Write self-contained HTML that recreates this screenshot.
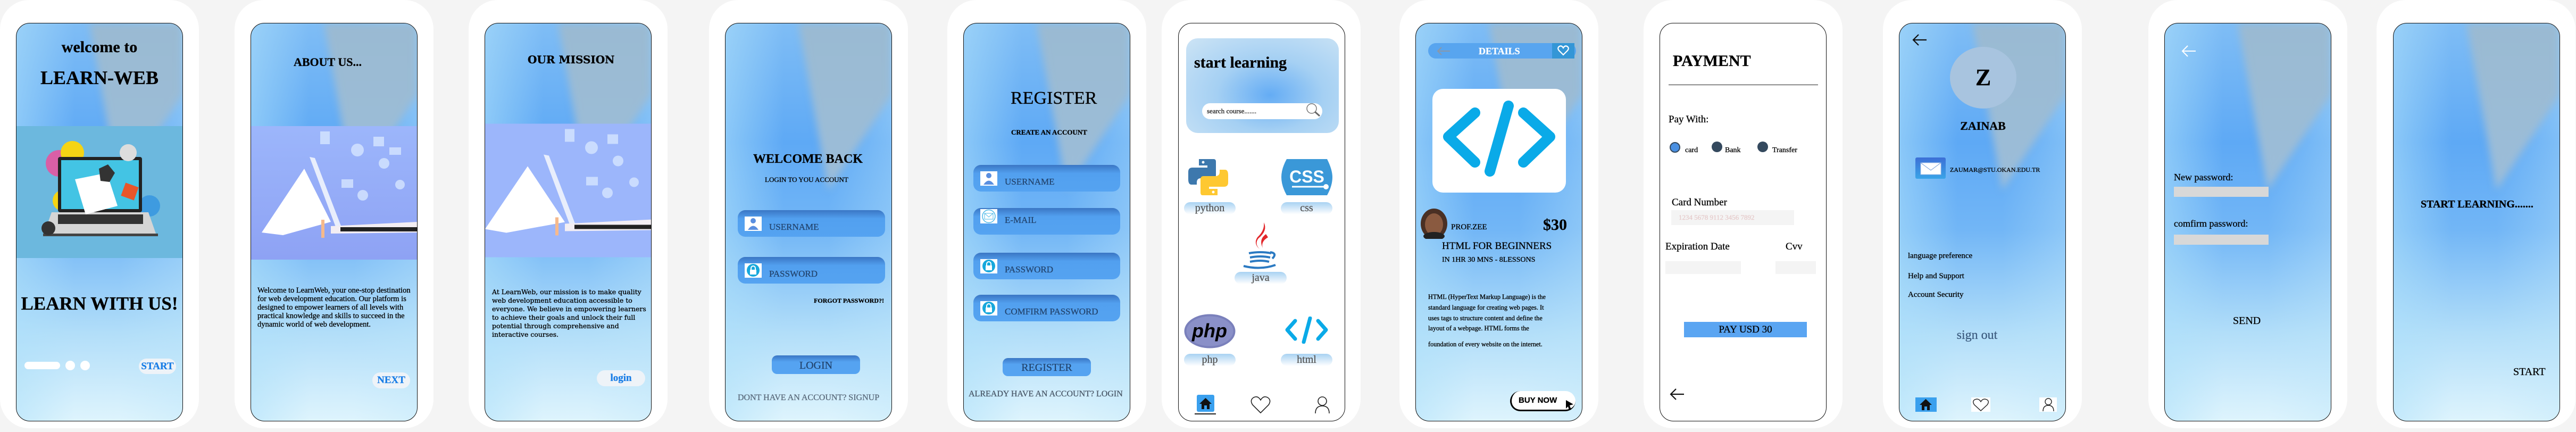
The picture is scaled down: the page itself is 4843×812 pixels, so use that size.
<!DOCTYPE html>
<html><head><meta charset="utf-8">
<style>
*{margin:0;padding:0;box-sizing:border-box}
html,body{width:4843px;height:812px;overflow:hidden;background:#f4f4f4;font-family:"Liberation Serif",serif;-webkit-text-stroke:0.3px currentColor}
.card{position:absolute;top:0;width:374px;height:805px;background:#fff;border-radius:55px}
.ph{position:absolute;top:43px;width:314px;height:749px;border:1.3px solid #111;border-radius:26px;overflow:hidden}
.bg{background:
 linear-gradient(to right,rgba(175,225,250,.55) 0%,rgba(175,225,250,0) 35%,rgba(175,225,250,0) 62%,rgba(190,230,250,.35) 100%),
 linear-gradient(to bottom,#7fbdf5 0%,#5ea9f5 30%,#72b6f6 52%,#b2def9 78%,#def4fd 100%);}
.wedge{position:absolute;left:0;top:0;width:100%;height:100%;filter:blur(7px)}
.wedge div{position:absolute;inset:0;clip-path:polygon(44% 0,100% 0,100% 18%,62% 42%);background:linear-gradient(to bottom,#9abad2,#9ec1e2)}
.wh{background:#fff}
.a{position:absolute;white-space:nowrap}
.b{font-weight:bold}
.fld{position:absolute;height:50px;border-radius:14px;background:linear-gradient(to bottom,#3a76c4 0%,#52a0ef 32%,#55a3f1 100%)}
.fld .ic{position:absolute;left:13px;top:12px;width:32px;height:27px;background:#fff}
.fld span{position:absolute;left:59px;top:21px;font-size:17px;color:#23456f;line-height:22px}
.btn{position:absolute;border-radius:10px;background:linear-gradient(to bottom,#3a76c4 0%,#55a3f1 35%);color:#23456f;font-size:20px;text-align:center}
.lbl{position:absolute;width:97px;height:23px;border-radius:12px;background:linear-gradient(to bottom,#a8d2f2,#fff);color:#555;font-size:20px;text-align:center;line-height:22px}
.inp{position:absolute;background:#f4f4f4}
</style></head><body>

<!-- CARD 1 -->
<div class="card" style="left:0"></div>
<div class="ph bg" style="left:30px">
 <div class="wedge"><div></div></div>
 <div class="a b" style="left:0;width:100%;text-align:center;top:27px;font-size:30px;line-height:36px">welcome to</div>
 <div class="a b" style="left:0;width:100%;text-align:center;top:80px;font-size:36px;line-height:44px">LEARN-WEB</div>
 <svg class="a" style="left:0;top:193px" width="314" height="248" viewBox="0 0 314 248">
  <rect width="314" height="248" fill="#6cb8de"/>
  <circle cx="80" cy="70" r="25" fill="#ec4f9c" opacity=".85"/><circle cx="105" cy="50" r="22" fill="#f5d414"/>
  <circle cx="250" cy="150" r="20" fill="#3e9be0"/><circle cx="88" cy="140" r="20" fill="#f5d414"/>
  <rect x="78" y="58" width="158" height="104" rx="4" fill="#222"/>
  <rect x="84" y="64" width="146" height="92" fill="#43c4e4"/>
  <polygon points="66,162 248,162 262,202 52,202" fill="#d5d5d5"/>
  <rect x="78" y="166" width="160" height="18" fill="#333"/>
  <rect x="50" y="202" width="216" height="5" fill="#444"/>
  <polygon points="110,100 170,88 190,150 130,166" fill="#fff"/>
  <circle cx="210" cy="50" r="16" fill="#ddd"/><polygon points="155,80 172,72 185,88 175,105 158,103" fill="#333"/>
  <rect x="200" y="110" width="26" height="26" fill="#e8562a" transform="rotate(20 213 123)"/>
  <circle cx="60" cy="192" r="13" fill="#333"/>
 </svg>
 <div class="a b" style="left:0;width:100%;text-align:center;top:505px;font-size:35px;line-height:44px">LEARN WITH US!</div>
 <div class="a" style="left:15px;top:636px;width:67px;height:14px;border-radius:7px;background:#fff"></div>
 <div class="a" style="left:92px;top:634px;width:18px;height:18px;border-radius:9px;background:#fff"></div>
 <div class="a" style="left:120px;top:634px;width:18px;height:18px;border-radius:9px;background:#fff"></div>
 <div class="a b" style="left:230px;top:630px;width:70px;height:29px;border-radius:15px;background:#eef3f8;color:#1a7ee6;font-size:19px;line-height:29px;text-align:center">START</div>
</div>

<!-- CARD 2 -->
<div class="card" style="left:441px"></div>
<div class="ph bg" style="left:471px">
 <div class="wedge"><div></div></div>
 <div class="a b" style="left:80px;top:59px;font-size:22px;line-height:28px">ABOUT US...</div>
 <svg class="a" style="left:0;top:193px" width="314" height="251" viewBox="0 0 314 251">
  <defs><linearGradient id="pb" x1="0" y1="0" x2="0" y2="1"><stop offset="0" stop-color="#9cb6fb"/><stop offset="1" stop-color="#8ea2f4"/></linearGradient></defs>
  <rect width="314" height="251" fill="url(#pb)"/>
  <g fill="#d6e6ff" opacity=".8"><circle cx="200" cy="45" r="12"/><circle cx="250" cy="70" r="10"/><rect x="130" y="10" width="18" height="24"/><rect x="230" y="20" width="20" height="18"/><circle cx="280" cy="110" r="9"/><rect x="170" y="100" width="22" height="16"/><circle cx="210" cy="130" r="10"/><rect x="260" y="40" width="22" height="14"/></g>
  <polygon points="20,200 100,80 150,180 60,205" fill="#fff"/>
  <polygon points="110,58 120,60 170,190 160,192" fill="#e8eefc"/>
  <polygon points="150,188 314,180 314,200 150,202" fill="#f3eef3"/>
  <rect x="168" y="190" width="146" height="8" fill="#222"/>
  <rect x="132" y="176" width="6" height="34" fill="#f6b98c"/>
 </svg>
 <div class="a" style="left:12px;top:494px;width:295px;font-size:14.5px;line-height:16px;white-space:normal">Welcome to LearnWeb, your one-stop destination for web development education. Our platform is designed to empower learners of all levels with practical knowledge and skills to succeed in the dynamic world of web development.</div>
 <div class="a b" style="left:228px;top:656px;width:71px;height:30px;border-radius:15px;background:#eef3f8;color:#1a7ee6;font-size:19px;line-height:30px;text-align:center">NEXT</div>
</div>

<!-- CARD 3 -->
<div class="card" style="left:881px"></div>
<div class="ph bg" style="left:911px">
 <div class="wedge"><div></div></div>
 <div class="a b" style="left:80px;top:55px;font-size:20px;line-height:26px;font-family:'DejaVu Serif',serif">OUR MISSION</div>
 <svg class="a" style="left:0;top:188px" width="314" height="252" viewBox="0 0 314 251">
  <rect width="314" height="251" fill="#9cb6fb"/>
  <g fill="#d6e6ff" opacity=".8"><circle cx="200" cy="45" r="12"/><circle cx="250" cy="70" r="10"/><rect x="150" y="10" width="18" height="24"/><rect x="230" y="20" width="20" height="18"/><circle cx="280" cy="110" r="9"/><rect x="190" y="100" width="22" height="16"/><circle cx="230" cy="130" r="10"/></g>
  <polygon points="0,198 80,80 150,185 40,205" fill="#fff"/>
  <polygon points="110,58 120,60 170,190 160,192" fill="#e8eefc"/>
  <polygon points="150,188 314,180 314,200 150,202" fill="#f3eef3"/>
  <rect x="168" y="190" width="146" height="8" fill="#222"/>
  <rect x="132" y="176" width="6" height="34" fill="#f6b98c"/>
 </svg>
 <div class="a" style="left:13px;top:497px;width:290px;font-size:12.5px;line-height:16px;white-space:normal;font-family:'DejaVu Serif',serif">At LearnWeb, our mission is to make quality web development education accessible to everyone. We believe in empowering learners to achieve their goals and unlock their full potential through comprehensive and interactive courses.</div>
 <div class="a b" style="left:210px;top:652px;width:91px;height:30px;border-radius:15px;background:#eef3f8;color:#1a7ee6;font-size:19px;line-height:30px;text-align:center">login</div>
</div>

<!-- CARD 4 LOGIN -->
<div class="card" style="left:1333px"></div>
<div class="ph bg" style="left:1363px">
 <div class="wedge"><div></div></div>
 <div class="a b" style="left:52px;top:240px;font-size:24px;line-height:30px">WELCOME BACK</div>
 <div class="a" style="left:74px;top:286px;font-size:13px;line-height:16px">LOGIN TO YOU ACCOUNT</div>
 <div class="fld" style="left:23px;top:351px;width:277px"><div class="ic"><svg width="32" height="27"><circle cx="16" cy="8" r="5" fill="#5a8fe0"/><path d="M6 25 Q16 10 26 25Z" fill="#5a8fe0"/></svg></div><span>USERNAME</span></div>
 <div class="fld" style="left:23px;top:439px;width:277px"><div class="ic"><svg width="32" height="27"><circle cx="16" cy="13" r="12" fill="#17a8dc"/><rect x="10" y="12" width="12" height="9" fill="#fff"/><path d="M12 12 V9 a4 4 0 0 1 8 0 V12" stroke="#fff" stroke-width="2" fill="none"/></svg></div><span>PASSWORD</span></div>
 <div class="a b" style="right:14px;top:513px;font-size:12px;line-height:16px">FORGOT PASSWORD?!</div>
 <div class="btn" style="left:87px;top:624px;width:166px;height:35px;line-height:38px">LOGIN</div>
 <div class="a" style="left:23px;top:694px;font-size:16px;line-height:20px;color:#5b6b7c">DONT HAVE AN ACCOUNT? SIGNUP</div>
</div>

<!-- CARD 5 REGISTER -->
<div class="card" style="left:1781px"></div>
<div class="ph bg" style="left:1811px">
 <div class="wedge"><div></div></div>
 <div class="a" style="left:88px;top:120px;font-size:34px;line-height:42px">REGISTER</div>
 <div class="a b" style="left:89px;top:197px;font-size:13px;line-height:16px">CREATE AN ACCOUNT</div>
 <div class="fld" style="left:18px;top:266px;width:276px"><div class="ic"><svg width="32" height="27"><circle cx="16" cy="8" r="5" fill="#5a8fe0"/><path d="M6 25 Q16 10 26 25Z" fill="#5a8fe0"/></svg></div><span>USERNAME</span></div>
 <div class="fld" style="left:18px;top:347px;width:276px"><div class="ic" style="top:2px"><svg width="32" height="27"><circle cx="16" cy="13.5" r="12" fill="none" stroke="#4cb8e8" stroke-width="1.5"/><rect x="8" y="8" width="16" height="11" fill="none" stroke="#4cb8e8"/><path d="M8 8 L16 15 L24 8" fill="none" stroke="#4cb8e8"/></svg></div><span style="top:12px">E-MAIL</span></div>
 <div class="fld" style="left:18px;top:431px;width:276px"><div class="ic"><svg width="32" height="27"><circle cx="16" cy="13" r="12" fill="#17a8dc"/><rect x="10" y="12" width="12" height="9" fill="#fff"/><path d="M12 12 V9 a4 4 0 0 1 8 0 V12" stroke="#fff" stroke-width="2" fill="none"/></svg></div><span>PASSWORD</span></div>
 <div class="fld" style="left:18px;top:510px;width:276px"><div class="ic"><svg width="32" height="27"><circle cx="16" cy="13" r="12" fill="#17a8dc"/><rect x="10" y="12" width="12" height="9" fill="#fff"/><path d="M12 12 V9 a4 4 0 0 1 8 0 V12" stroke="#fff" stroke-width="2" fill="none"/></svg></div><span>COMFIRM PASSWORD</span></div>
 <div class="btn" style="left:73px;top:629px;width:166px;height:34px;line-height:37px">REGISTER</div>
 <div class="a" style="left:9px;top:687px;font-size:16px;line-height:20px;color:#4a5868">ALREADY HAVE AN ACCOUNT? LOGIN</div>
</div>

<!-- CARD 6 COURSES -->
<div class="card" style="left:2184px"></div>
<div class="ph wh" style="left:2215px">
 <div class="a" style="left:14px;top:28px;width:287px;height:178px;border-radius:22px;background:radial-gradient(ellipse at 55% 60%,#64acf4 0%,#a5d0f3 45%,#cde4f5 100%)"></div>
 <div class="a b" style="left:29px;top:55px;font-size:30px;line-height:38px">start learning</div>
 <div class="a" style="left:44px;top:150px;width:226px;height:30px;border-radius:15px;background:#fff"></div>
 <div class="a" style="left:53px;top:157px;font-size:13px;line-height:16px;color:#222">search course.......</div>
 <svg class="a" style="left:238px;top:148px" width="30" height="30"><circle cx="12" cy="12" r="9" fill="none" stroke="#777" stroke-width="1.5"/><line x1="18" y1="18" x2="27" y2="26" stroke="#666" stroke-width="3"/></svg>
 <svg class="a" style="left:18px;top:255px" width="75" height="68" viewBox="0 0 75 68">
  <path d="M20 0 H48 Q52 0 52 5 V30 Q52 36 46 36 H24 Q16 36 16 44 V48 H6 Q0 48 0 38 V24 Q0 16 8 16 H36 V12 H20Z" fill="#3d78ad"/>
  <circle cx="28" cy="6" r="2.5" fill="#fff"/>
  <path d="M55 68 H27 Q23 68 23 63 V38 Q23 32 29 32 H51 Q59 32 59 24 V20 H69 Q75 20 75 30 V44 Q75 52 67 52 H39 V56 H55Z" fill="#fec831"/>
  <circle cx="47" cy="62" r="2.5" fill="#fff"/>
 </svg>
 <div class="lbl" style="left:10px;top:336px">python</div>
 <svg class="a" style="left:193px;top:255px" width="96" height="68" viewBox="0 0 96 68">
  <path d="M10 0 H86 Q96 20 96 34 Q96 50 86 68 H10 Q0 50 0 34 Q0 18 10 0Z" fill="#3a98d8"/>
  <text x="48" y="44" text-anchor="middle" font-family="Liberation Sans,sans-serif" font-size="32" font-weight="bold" fill="#fff">CSS</text>
  <line x1="20" y1="52" x2="82" y2="52" stroke="#fff" stroke-width="3"/><circle cx="84" cy="52" r="5" fill="#fff"/>
 </svg>
 <div class="lbl" style="left:192px;top:336px">css</div>
 <svg class="a" style="left:120px;top:374px" width="66" height="88" viewBox="0 0 66 88">
  <path d="M40 0 Q48 15 30 30 Q22 40 32 50 Q20 40 28 28 Q42 15 40 0Z" fill="#e2262a"/>
  <path d="M44 22 Q30 32 38 48 Q34 36 48 28Z" fill="#e2262a"/>
  <g fill="none" stroke="#2b7ac2" stroke-width="4"><path d="M12 58 Q34 54 54 58"/><path d="M14 66 Q34 62 52 66"/><path d="M14 74 Q34 70 50 74"/><path d="M2 82 Q34 90 62 80"/><path d="M52 56 Q66 58 56 68"/></g>
 </svg>
 <div class="lbl" style="left:105px;top:467px;width:98px">java</div>
 <svg class="a" style="left:10px;top:546px" width="97" height="65" viewBox="0 0 97 65">
  <ellipse cx="48.5" cy="32.5" rx="48" ry="32" fill="#7a80bb"/>
  <ellipse cx="48.5" cy="32.5" rx="44" ry="28" fill="#8a90c8"/>
  <text x="48" y="44" text-anchor="middle" font-family="Liberation Sans,sans-serif" font-size="36" font-weight="bold" font-style="italic" fill="#000">php</text>
 </svg>
 <div class="lbl" style="left:10px;top:621px">php</div>
 <svg class="a" style="left:199px;top:551px" width="83" height="51" viewBox="0 0 83 51">
  <g fill="none" stroke="#0aaae8" stroke-width="7" stroke-linecap="round" stroke-linejoin="round"><path d="M20 8 L5 25 L20 42"/><path d="M63 8 L78 25 L63 42"/><path d="M48 3 L36 48"/></g>
 </svg>
 <div class="lbl" style="left:192px;top:621px">html</div>
 <div class="a" style="left:34px;top:698px;width:33px;height:32px;background:#3aa0ee;border-radius:3px"></div>
 <svg class="a" style="left:38px;top:702px" width="25" height="24"><path d="M12.5 2 L24 13 H20 V23 H15 V16 H10 V23 H5 V13 H1Z" fill="#111"/></svg>
 <div class="a" style="left:30px;top:733px;width:40px;height:2px;background:#222"></div>
 <svg class="a" style="left:135px;top:700px" width="38" height="34"><path d="M19 32 L4 17 Q-2 8 6 3 Q14 -1 19 8 Q24 -1 32 3 Q40 8 34 17Z" fill="none" stroke="#222" stroke-width="1.6"/></svg>
 <svg class="a" style="left:255px;top:700px" width="30" height="34"><circle cx="15" cy="10" r="8" fill="none" stroke="#222" stroke-width="1.6"/><path d="M2 33 Q2 19 15 19 Q28 19 28 33" fill="none" stroke="#222" stroke-width="1.6"/></svg>
</div>

<!-- CARD 7 DETAILS -->
<div class="card" style="left:2631px"></div>
<div class="ph bg" style="left:2661px">
 <div class="wedge"><div></div></div>
 <div class="a" style="left:23px;top:37px;width:278px;height:29px;border-radius:15px;background:#58a5ef"></div>
 <svg class="a" style="left:38px;top:43px" width="28" height="18"><path d="M26 9 H3 M10 2 L3 9 L10 16" fill="none" stroke="#8a97a8" stroke-width="2"/></svg>
 <div class="a b" style="left:118px;top:40px;font-size:18px;line-height:24px;color:#fff">DETAILS</div>
 <div class="a" style="left:256px;top:37px;width:42px;height:29px;background:#3496d6"></div>
 <svg class="a" style="left:266px;top:41px" width="22" height="20"><path d="M11 18 L3 10 Q-1 5 4 2 Q8 0 11 5 Q14 0 18 2 Q23 5 19 10Z" fill="none" stroke="#fff" stroke-width="2.2"/></svg>
 <div class="a" style="left:31px;top:123px;width:251px;height:195px;border-radius:20px;background:#fff"></div>
 <svg class="a" style="left:31px;top:123px" width="251" height="195" viewBox="0 0 251 195">
  <g fill="none" stroke="#0aaae8" stroke-width="20" stroke-linecap="round" stroke-linejoin="round"><path d="M80 45 L30 90 L80 138"/><path d="M171 45 L221 90 L171 138"/><path d="M143 32 L108 155"/></g>
 </svg>
 <svg class="a" style="left:9px;top:348px" width="50" height="57"><ellipse cx="25" cy="28.5" rx="25" ry="28.5" fill="#4a3024"/><ellipse cx="25" cy="30" rx="17" ry="21" fill="#8a5a40"/><ellipse cx="25" cy="52" rx="20" ry="8" fill="#222"/></svg>
 <div class="a" style="left:66px;top:373px;font-size:15px;line-height:20px">PROF.ZEE</div>
 <div class="a b" style="left:239px;top:361px;font-size:30px;line-height:36px">$30</div>
 <div class="a" style="left:49px;top:407px;font-size:19px;line-height:24px">HTML FOR BEGINNERS</div>
 <div class="a" style="left:49px;top:436px;font-size:14px;line-height:18px">IN 1HR 30 MNS  - 8LESSONS</div>
 <div class="a" style="left:23px;top:506px;font-size:12.3px;line-height:16px">HTML (HyperText Markup Language) is the</div>
 <div class="a" style="left:23px;top:526px;font-size:12.3px;line-height:16px">standard language for creating web pages. It</div>
 <div class="a" style="left:23px;top:546px;font-size:12.3px;line-height:16px">uses tags to structure content and define the</div>
 <div class="a" style="left:23px;top:565px;font-size:12.3px;line-height:16px">layout of a webpage. HTML forms the</div>
 <div class="a" style="left:23px;top:595px;font-size:12.3px;line-height:16px">foundation of every website on the internet.</div>
 <div class="a" style="left:177px;top:691px;width:123px;height:38px;border-radius:19px;background:#fff;border-left:3px solid #000;border-bottom:3px solid #000"></div>
 <div class="a b" style="left:193px;top:699px;font-size:15px;line-height:20px;font-family:'Liberation Sans',sans-serif">BUY NOW</div>
 <svg class="a" style="left:276px;top:700px" width="24" height="28"><path d="M6 8 L20 16 L13 18 L16 26 L12 27 L10 20 L6 24Z" fill="#000"/></svg>
</div>

<!-- CARD 8 PAYMENT -->
<div class="card" style="left:3090px"></div>
<div class="ph wh" style="left:3120px">
 <div class="a b" style="left:24px;top:53px;font-size:30px;line-height:36px">PAYMENT</div>
 <div class="a" style="left:16px;top:115px;width:281px;height:1px;background:#222"></div>
 <div class="a" style="left:16px;top:169px;font-size:19px;line-height:24px">Pay With:</div>
 <div class="a" style="left:18px;top:223px;width:20px;height:20px;border-radius:10px;background:#4a90e2;border:2px solid #34495e"></div>
 <div class="a" style="left:97px;top:222px;width:20px;height:20px;border-radius:10px;background:#34495e"></div>
 <div class="a" style="left:183px;top:222px;width:20px;height:20px;border-radius:10px;background:#34495e"></div>
 <div class="a" style="left:47px;top:230px;font-size:14px;line-height:18px">card</div>
 <div class="a" style="left:122px;top:230px;font-size:14px;line-height:18px">Bank</div>
 <div class="a" style="left:211px;top:230px;font-size:14px;line-height:18px">Transfer</div>
 <div class="a" style="left:22px;top:325px;font-size:19px;line-height:24px">Card Number</div>
 <div class="inp" style="left:21px;top:351px;width:231px;height:28px"></div>
 <div class="a" style="left:35px;top:357px;font-size:13px;line-height:16px;color:#e6cccc">1234 5678 9112 3456 7892</div>
 <div class="a" style="left:10px;top:408px;font-size:19px;line-height:24px">Expiration Date</div>
 <div class="a" style="left:236px;top:408px;font-size:19px;line-height:24px">Cvv</div>
 <div class="inp" style="left:10px;top:447px;width:142px;height:24px"></div>
 <div class="inp" style="left:217px;top:447px;width:76px;height:24px"></div>
 <div class="a" style="left:45px;top:561px;width:231px;height:29px;background:#5aa5f2;text-align:center;font-size:19px;line-height:30px">PAY USD 30</div>
 <svg class="a" style="left:17px;top:685px" width="30" height="24"><path d="M28 12 H3 M13 2 L3 12 L13 22" fill="none" stroke="#111" stroke-width="2.2"/></svg>
</div>

<!-- CARD 9 PROFILE -->
<div class="card" style="left:3540px"></div>
<div class="ph bg" style="left:3570px">
 <div class="wedge"><div></div></div>
 <svg class="a" style="left:23px;top:19px" width="30" height="24"><path d="M28 12 H3 M13 2 L3 12 L13 22" fill="none" stroke="#111" stroke-width="2.2"/></svg>
 <div class="a" style="left:95px;top:44px;width:125px;height:116px;border-radius:50%;background:#a8c4df"></div>
 <div class="a b" style="left:95px;top:74px;width:125px;text-align:center;font-size:44px;line-height:56px">Z</div>
 <div class="a b" style="left:0;width:314px;text-align:center;top:179px;font-size:22px;line-height:28px">ZAINAB</div>
 <div class="a" style="left:30px;top:252px;width:57px;height:40px;border-radius:3px;background:linear-gradient(to bottom,#3c6fd6,#3aa4e8)"></div>
 <svg class="a" style="left:39px;top:261px" width="40" height="24"><rect x="1" y="1" width="38" height="22" fill="#fff" stroke="#a9c3ea"/><path d="M1 1 L20 15 L39 1" fill="none" stroke="#6f9ad8"/></svg>
 <div class="a" style="left:95px;top:267px;font-size:12px;line-height:16px">ZAUMAR@STU.OKAN.EDU.TR</div>
 <div class="a" style="left:16px;top:427px;font-size:15px;line-height:20px">language preference</div>
 <div class="a" style="left:16px;top:465px;font-size:15px;line-height:20px">Help and Support</div>
 <div class="a" style="left:16px;top:500px;font-size:15px;line-height:20px">Account Security</div>
 <div class="a" style="left:0;width:292px;text-align:center;top:571px;font-size:24px;line-height:30px;color:#3d5c80">sign out</div>
 <div class="a" style="left:30px;top:703px;width:40px;height:27px;background:#3aa0ee"></div>
 <svg class="a" style="left:37px;top:704px" width="25" height="24"><path d="M12.5 2 L24 13 H20 V23 H15 V16 H10 V23 H5 V13 H1Z" fill="#111"/></svg>
 <div class="a" style="left:135px;top:703px;width:36px;height:27px;background:#fff"></div>
 <svg class="a" style="left:137px;top:705px" width="32" height="24"><path d="M16 23 L4 12 Q-1 5 5 2 Q12 -1 16 6 Q20 -1 27 2 Q33 5 28 12Z" fill="none" stroke="#222" stroke-width="1.4"/></svg>
 <div class="a" style="left:263px;top:703px;width:33px;height:27px;background:#fff"></div>
 <svg class="a" style="left:268px;top:704px" width="24" height="26"><circle cx="12" cy="7" r="6" fill="none" stroke="#222" stroke-width="1.4"/><path d="M2 25 Q2 14 12 14 Q22 14 22 25" fill="none" stroke="#222" stroke-width="1.4"/></svg>
</div>

<!-- CARD 10 NEW PASSWORD -->
<div class="card" style="left:4039px"></div>
<div class="ph bg" style="left:4069px">
 <div class="wedge"><div></div></div>
 <svg class="a" style="left:30px;top:40px" width="30" height="24"><path d="M28 12 H3 M13 2 L3 12 L13 22" fill="none" stroke="#fff" stroke-width="2"/></svg>
 <div class="a" style="left:17px;top:277px;font-size:18px;line-height:24px">New password:</div>
 <div class="a" style="left:17px;top:307px;width:178px;height:19px;background:#d8d8d8"></div>
 <div class="a" style="left:17px;top:364px;font-size:18px;line-height:24px">comfirm password:</div>
 <div class="a" style="left:17px;top:397px;width:178px;height:19px;background:#d8d8d8"></div>
 <div class="a" style="left:128px;top:546px;font-size:20px;line-height:26px">SEND</div>
</div>

<!-- CARD 11 START -->
<div class="card" style="left:4468px"></div>
<div class="ph bg" style="left:4499px">
 <div class="wedge"><div></div></div>
 <div class="a b" style="left:51px;top:327px;font-size:20px;line-height:26px">START LEARNING.......</div>
 <div class="a" style="left:225px;top:642px;font-size:20px;line-height:26px">START</div>
</div>

</body></html>
